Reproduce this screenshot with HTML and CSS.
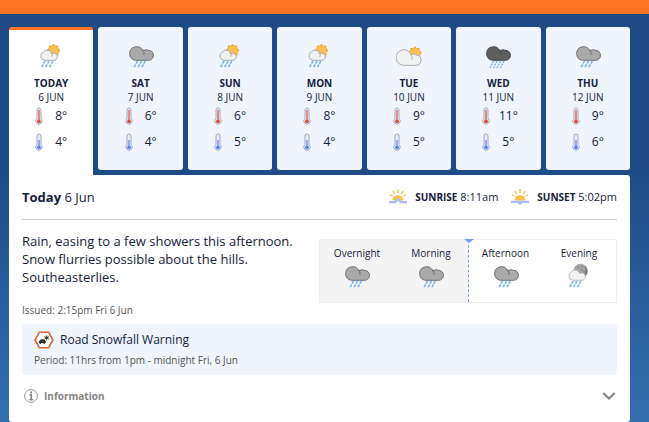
FILE: index.html
```html
<!DOCTYPE html>
<html lang="en">
<head>
    <meta charset="utf-8">
    <title>Forecast</title>
    <link rel="stylesheet" href="styles.css">
</head>
<body>
<!-- weather icons -->
<svg class="sprite" aria-hidden="true">
    <symbol id="drops" viewBox="0 0 13 8">
        <path d="M4.5 0.5L1 7M8.5 0.5L5 7M12.3 0.5L8.8 7" fill="none" stroke="#7ab8f7" stroke-width="1.7" stroke-dasharray="3 1"/>
    </symbol>
    <symbol id="sun" viewBox="0 0 14 14">
        <path d="M7 0.3L8.7 2.1L11.6 1.9L11.8 4.6L13.8 6.8L12 9L11.9 11.9L9 12L7 13.7L5 12L2.1 11.9L2 9L0.2 6.8L2.2 4.6L2.4 1.9L5.3 2.1Z" fill="#f0a92c"/>
        <circle cx="7" cy="7" r="4.8" fill="#fdbf55"/>
    </symbol>
    <symbol id="rain" viewBox="0 0 26 26">
        <path d="M7.5 17.3A6.8 6.8 0 1 1 14.8 8.1A5 5 0 0 1 20.5 7.3A5 5 0 0 1 20.5 17.3Z" fill="#a9a9a9" stroke="#6f6f6f"/>
        <path d="M14.6 6.5Q16.5 8.5 16 12" fill="none" stroke="#6f6f6f"/>
        <use href="#drops" x="5" y="17.5" width="13" height="8"/>
    </symbol>
    <symbol id="heavy" viewBox="0 0 26 26">
        <path d="M7.5 17.3A6.8 6.8 0 1 1 14.8 8.1A5 5 0 0 1 20.5 7.3A5 5 0 0 1 20.5 17.3Z" fill="#5e5e5e" stroke="#484848"/>
        <path d="M14.6 6.5Q16.5 8.5 16 12" fill="none" stroke="#484848"/>
        <path d="M8.5 18L5 25M12 18L8.5 25M15.5 18L12 25M19 18L15.5 25" fill="none" stroke="#7ab8f7" stroke-width="1.6" stroke-dasharray="2 1"/>
    </symbol>
    <symbol id="showers" viewBox="0 0 26 26">
        <use href="#sun" x="8.5" y="0.5" width="14" height="14"/>
        <path d="M7 17.3A4.3 4.3 0 0 1 5.2 9.2A4.8 4.8 0 0 1 13.8 10.7A3.6 3.6 0 1 1 16 17.3Z" fill="#f1f2f2" stroke="#aaa"/>
        <path d="M13.8 10.5Q14.5 12 13.8 13.8" fill="none" stroke="#aaa"/>
        <use href="#drops" x="2.5" y="17.5" width="13" height="8"/>
    </symbol>
    <symbol id="night" viewBox="0 0 26 26">
        <circle cx="14.5" cy="8" r="7.2" fill="#a5a5a5"/>
        <path d="M18.8 2.5A7.2 7.2 0 0 1 17.5 14.5Q20.7 9 18.8 2.5Z" fill="#777"/>
        <g fill="#858585"><circle cx="12" cy="4.5" r="1"/><circle cx="16" cy="3.5" r="0.9"/><circle cx="15.5" cy="7" r="1"/><circle cx="18" cy="9" r="0.9"/></g>
        <path d="M7 17.3A4.3 4.3 0 0 1 5.2 9.2A4.8 4.8 0 0 1 13.8 10.7A3.6 3.6 0 1 1 16 17.3Z" fill="#f1f2f2" stroke="#bbb"/>
        <use href="#drops" x="2.5" y="17.5" width="13" height="8"/>
    </symbol>
    <symbol id="cloudy" viewBox="0 0 26 26">
        <use href="#sun" x="12" y="3" width="14" height="14"/>
        <path d="M7.5 22.3A7.8 7.8 0 1 1 15 11.5A5.2 5.2 0 0 1 20.5 12A5.2 5.2 0 0 1 20.5 22.3Z" fill="#f1f2f2" stroke="#aaa"/>
        <path d="M14.8 11.5Q16.6 13 16 16.5" fill="none" stroke="#aaa"/>
    </symbol>
    <symbol id="high" viewBox="0 0 8 18">
        <path d="M2 11.5V3A2 2 0 0 1 6 3V11.5A3.2 3.2 0 1 1 2 11.5Z" fill="#eceef5" stroke="#a0a8c4"/>
        <path d="M4 3V14" stroke="#df4b33" stroke-width="1.2"/><circle cx="4" cy="14.3" r="1.9" fill="#df4b33"/>
    </symbol>
    <symbol id="low" viewBox="0 0 8 18">
        <path d="M2 11.5V3A2 2 0 0 1 6 3V11.5A3.2 3.2 0 1 1 2 11.5Z" fill="#eceef5" stroke="#a0a8c4"/>
        <path d="M4 7V14" stroke="#5b7fe8" stroke-width="1.2"/><circle cx="4" cy="14.3" r="1.9" fill="#5b7fe8"/>
    </symbol>
    <symbol id="rays" viewBox="0 0 18 12">
        <path d="M3.5 11.5A5.5 5.5 0 0 1 14.5 11.5Z" fill="#fcbf49"/>
        <path d="M9 0V4M4 2L5.7 5M14 2L12.3 5M0.8 5.7L3.6 7.3M17.2 5.7L14.4 7.3" stroke="#fcbf49" stroke-width="1.3"/>
    </symbol>
</svg>

<div class="topbar"></div>
<main class="forecast">
    <div class="days">
        <button class="day active" type="button">
            <svg class="icon"><use href="#showers"/></svg>
            <strong>TODAY</strong>
            <span class="date">6 JUN</span>
            <span class="temp"><svg><use href="#high"/></svg><span>8°</span></span>
            <span class="temp"><svg><use href="#low"/></svg><span>4°</span></span>
        </button>
        <button class="day" type="button">
            <svg class="icon"><use href="#rain"/></svg>
            <strong>SAT</strong>
            <span class="date">7 JUN</span>
            <span class="temp"><svg><use href="#high"/></svg><span>6°</span></span>
            <span class="temp"><svg><use href="#low"/></svg><span>4°</span></span>
        </button>
        <button class="day" type="button">
            <svg class="icon"><use href="#showers"/></svg>
            <strong>SUN</strong>
            <span class="date">8 JUN</span>
            <span class="temp"><svg><use href="#high"/></svg><span>6°</span></span>
            <span class="temp"><svg><use href="#low"/></svg><span>5°</span></span>
        </button>
        <button class="day" type="button">
            <svg class="icon"><use href="#showers"/></svg>
            <strong>MON</strong>
            <span class="date">9 JUN</span>
            <span class="temp"><svg><use href="#high"/></svg><span>8°</span></span>
            <span class="temp"><svg><use href="#low"/></svg><span>4°</span></span>
        </button>
        <button class="day" type="button">
            <svg class="icon"><use href="#cloudy"/></svg>
            <strong>TUE</strong>
            <span class="date">10 JUN</span>
            <span class="temp"><svg><use href="#high"/></svg><span>9°</span></span>
            <span class="temp"><svg><use href="#low"/></svg><span>5°</span></span>
        </button>
        <button class="day" type="button">
            <svg class="icon"><use href="#heavy"/></svg>
            <strong>WED</strong>
            <span class="date">11 JUN</span>
            <span class="temp"><svg><use href="#high"/></svg><span>11°</span></span>
            <span class="temp"><svg><use href="#low"/></svg><span>5°</span></span>
        </button>
        <button class="day" type="button">
            <svg class="icon"><use href="#rain"/></svg>
            <strong>THU</strong>
            <span class="date">12 JUN</span>
            <span class="temp"><svg><use href="#high"/></svg><span>9°</span></span>
            <span class="temp"><svg><use href="#low"/></svg><span>6°</span></span>
        </button>
    </div>

    <section class="panel">
        <header class="panel-head">
            <h2><b>Today</b> 6 Jun</h2>
            <div class="sun">
                <svg viewBox="0 0 18 16"><use href="#rays" width="18" height="12"/><path d="M0 14.2V12H5.5L9 8.8L12.5 12H18V14.2H11.5L9 12L6.5 14.2Z" fill="#a9b9f3"/></svg>
                <span><b>SUNRISE</b> 8:11am</span>
            </div>
            <div class="sun">
                <svg viewBox="0 0 18 16"><use href="#rays" width="18" height="12"/><path d="M0 14V11.7H18V14H11.5L9 16L6.5 14Z" fill="#a9b9f3"/></svg>
                <span><b>SUNSET</b> 5:02pm</span>
            </div>
        </header>

        <div class="summary">
            <div class="words">
                <p class="desc">Rain, easing to a few showers this afternoon. Snow flurries possible about the hills. Southeasterlies.</p>
                <p class="small">Issued: 2:15pm Fri 6 Jun</p>
            </div>
            <div class="parts">
                <div class="part past">Overnight<svg class="icon"><use href="#rain"/></svg></div>
                <div class="part past">Morning<svg class="icon"><use href="#rain"/></svg></div>
                <div class="part now">Afternoon<svg class="icon"><use href="#rain"/></svg></div>
                <div class="part">Evening<svg class="icon"><use href="#night"/></svg></div>
            </div>
        </div>

        <div class="warning">
            <h3>
                <svg viewBox="0 0 20 18">
                    <path d="M5.4 1.2H14.6L19 9L14.6 16.8H5.4L1 9Z" fill="#fff" stroke="#d9652b" stroke-width="1.6"/>
                    <path d="M5 10.2L7 8.2H10L11.8 10V12H10.8V13H9.5V12H7V13H5.6V12H5Z" fill="#333"/>
                    <path d="M12.6 4.3V9.3M10.3 5.5L15 8.2M15 5.5L10.3 8.2" stroke="#555"/><circle cx="12.6" cy="6.8" r="1.4" fill="#333"/>
                </svg>
                Road Snowfall Warning
            </h3>
            <p class="small">Period: 11hrs from 1pm - midnight Fri, 6 Jun</p>
        </div>

        <button class="info" type="button">
            <svg viewBox="0 0 14 14"><circle cx="7" cy="7" r="6.4" fill="#fff" stroke="#999"/><path d="M5.5 5.8H7.2V10.8M5.3 10.8H9" fill="none" stroke="#858585" stroke-width="1.6"/><circle cx="7" cy="3.4" r="1.1" fill="#858585"/></svg>
            <span>Information</span>
            <svg class="chevron" viewBox="0 0 14 8"><path d="M1.3 1L7 6.5L12.7 1" fill="none" stroke="#858585" stroke-width="2.2"/></svg>
        </button>
    </section>
</main>
</body>
</html>
```

FILE: styles.css
```css
*{ margin: 0; padding: 0; box-sizing: border-box;}
body{ min-height: 100vh; background: linear-gradient(#1e4b85 0, #1e4b85 170px, #3570b0 430px); color: #141b3c; font: 11px/14px "Open Sans", sans-serif;}
button{ border: 0; background: none; color: inherit; font: inherit; cursor: pointer;}
svg{ display: block; flex: none;}
.sprite{ position: absolute; width: 0; height: 0;}

.topbar{ height: 14px; background: #ff7223;}
.forecast{ margin: 13px 19px 0 9px;}

/* day tabs */
.days{ display: grid; grid-template-columns: repeat(7, 1fr); gap: 5px;}
.day{ display: flex; flex-direction: column; align-items: center; height: 143px; padding-top: 16px; border-radius: 3px; background: #eff4fd;}
.day.active{ height: 148px; padding-top: 13px; border-top: 3px solid #ff7223; border-radius: 3px 3px 0 0; background: #fff;}
.icon{ width: 26px; height: 26px;}
.day strong{ margin-top: 7px; font-size: 10px; font-weight: 700;}
.date{ font-size: 10px;}
.temp{ display: flex; align-items: center; height: 26px; font-size: 12px;}
.temp:nth-of-type(2){ margin-top: -1px;}
.temp svg{ width: 8px; height: 18px; margin: 0 6px;}
.temp span{ width: 24px; text-align: center;}

/* selected day */
.panel{ padding: 0 13px 19px; border-radius: 0 3px 3px 3px; background: #fff;}
.panel-head{ display: flex; align-items: center; gap: 13px; height: 45px; border-bottom: 1px solid #ccc;}
.panel-head h2{ flex: 1; font-size: 13px; font-weight: 400;}
.sun{ display: flex; align-items: center; gap: 8px;}
.sun svg{ width: 18px; height: 16px;}
.sun b{ font-size: 10px;}

.summary{ display: flex; justify-content: space-between; padding-top: 12px;}
.words{ width: 280px;}
.desc{ font-size: 13px; line-height: 18px;}
.small{ color: #555; font-size: 10px;}
.words .small{ margin-top: 17px;}
.parts{ display: grid; grid-template-columns: repeat(4, 1fr); width: 298px; height: 64px; margin-top: 7px; border: 1px solid #eee;}
.part{ position: relative; display: flex; flex-direction: column; align-items: center; padding-top: 6px; font-size: 10px;}
.part .icon{ margin-top: 3px;}
.past{ background: #f4f4f4;}
.now{ border-left: 1px dashed #7b9bff;}
.now::before{ content: ""; position: absolute; top: -1px; left: -5px; border: 5px solid transparent; border-top: 4px solid #7b9bff; border-bottom: 0;}

.warning{ margin-top: 7px; padding: 7px 12px; border-radius: 3px; background: #eff4fd;}
.warning h3{ display: flex; align-items: center; gap: 6px; font-size: 12px; font-weight: 400;}
.warning svg{ width: 20px; height: 18px;}
.warning .small{ margin: 4px 0 1px;}

.info{ display: flex; align-items: center; gap: 6px; width: 100%; margin-top: 14px; padding: 0 1px 0 2px; color: #858585; font-size: 10px; font-weight: 700;}
.info svg{ width: 14px; height: 14px;}
.info .chevron{ height: 8px; margin-left: auto;}
```
